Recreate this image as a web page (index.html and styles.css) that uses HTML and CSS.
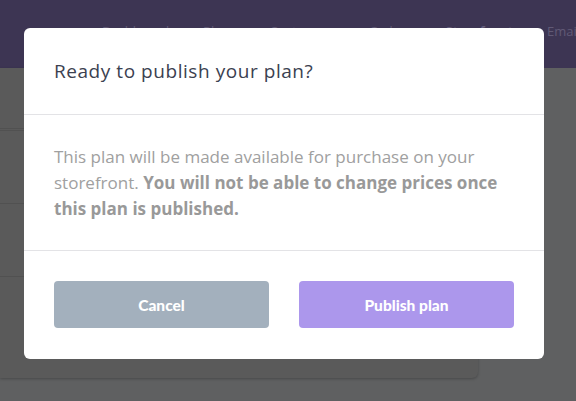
FILE: index.html
```html
<!DOCTYPE html>
<html>
<head>
<meta charset="utf-8">
<link rel="stylesheet" href="styles.css">
</head>
<body>
<div class="page">
  <header class="topbar">
    <nav class="nav">
      <span>Dashboard</span>
      <span>Plans</span>
      <span>Customers</span>
      <span>Orders</span>
      <span class="active">Storefront</span>
      <span>Email</span>
    </nav>
  </header>
  <main class="content">
    <div class="card">
      <div class="card-row first"></div>
      <div class="card-row"></div>
      <div class="card-row"></div>
      <div class="card-row last"></div>
    </div>
  </main>
</div>
<div class="modal">
  <div class="modal-head">Ready to publish your plan?</div>
  <div class="modal-body">This plan will be made available for purchase on your storefront. <strong>You will not be able to change prices once this plan is published.</strong></div>
  <div class="modal-foot">
    <button class="btn btn-cancel">Cancel</button>
    <button class="btn btn-primary">Publish plan</button>
  </div>
</div>
</body>
</html>
```
FILE: styles.css
```css
html, body {
  margin: 0;
  padding: 0;
}
body {
  width: 576px;
  height: 401px;
  overflow: hidden;
  background: #5f6061;
  font-family: "Open Sans", Lato, sans-serif;
  position: relative;
}
.page {
  display: flex;
  flex-direction: column;
  height: 401px;
}
.topbar {
  height: 68px;
  background: #3d3553;
  display: flex;
  align-items: flex-start;
  overflow: hidden;
}
.nav {
  display: flex;
  gap: 34px;
  padding: 22px 0 0 102px;
  font-size: 13px;
  color: #615a76;
  white-space: nowrap;
}
.nav .active {
  font-weight: 700;
  color: #665f7d;
}
.content {
  flex: 1;
}
.card {
  width: 478px;
  height: 310px;
  background: #5a5a5a;
  border-radius: 0 0 6px 0;
  box-shadow: 0 1px 3px rgba(0,0,0,0.25);
  display: flex;
  flex-direction: column;
}
.card-row {
  height: 72px;
  border-bottom: 1px solid #515151;
}
.card-row.first {
  height: 60px;
  border-bottom: 3px double #515151;
}
.card-row.last {
  border-bottom: none;
}
.modal {
  position: absolute;
  left: 24px;
  top: 28px;
  width: 520px;
  height: 331px;
  background: #fff;
  border-radius: 6px;
  display: flex;
  flex-direction: column;
}
.modal-head {
  height: 87px;
  box-sizing: border-box;
  padding: 0 30px;
  display: flex;
  align-items: center;
  font-size: 19px;
  letter-spacing: 0.55px;
  color: #3b4150;
  border-bottom: 1px solid #e3e3e6;
}
.modal-body {
  height: 136px;
  box-sizing: border-box;
  padding: 29px 30px 0;
  font-size: 17px;
  line-height: 26px;
  color: #a0a0a0;
  border-bottom: 1px solid #e3e3e6;
}
.modal-body strong {
  font-weight: 700;
  color: #999;
}
.modal-foot {
  flex: 1;
  padding: 30px;
  display: flex;
  gap: 30px;
}
.btn {
  flex: 1;
  height: 47px;
  border: none;
  border-radius: 4px;
  color: #fff;
  font-family: Lato, "Open Sans", sans-serif;
  font-weight: 900;
  font-size: 15.5px;
}
.btn-cancel {
  background: #a3b0bd;
}
.btn-primary {
  background: #ac97ec;
}
```
